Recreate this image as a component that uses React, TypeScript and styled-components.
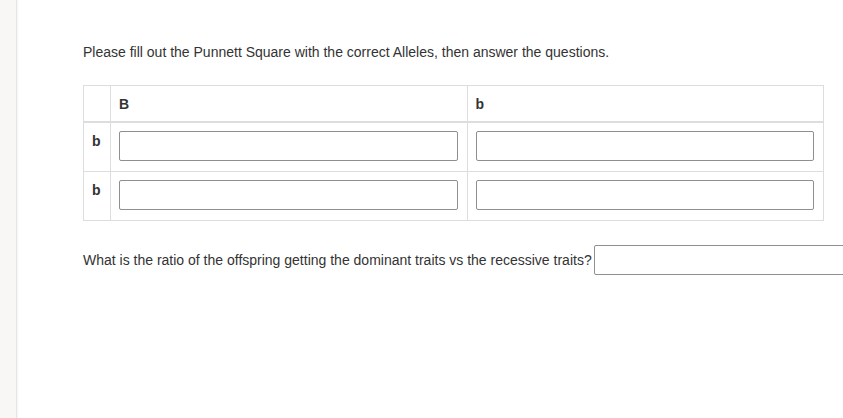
import React from "react";
import styled, { createGlobalStyle } from "styled-components";

const Global = createGlobalStyle`
  html, body {
    margin: 0;
    padding: 0;
    background: #ffffff;
    overflow: hidden;
  }
  body {
    font-family: "Liberation Sans", Arial, sans-serif;
    font-size: 14px;
    color: #333333;
  }
`;

const Page = styled.div`
  display: flex;
  width: 843px;
  height: 418px;
  overflow: hidden;
`;

const Sidebar = styled.div`
  flex: 0 0 16px;
  background: #f8f7f5;
  border-right: 1px solid #e6e5e3;
  box-shadow: 1px 0 2px rgba(0, 0, 0, 0.05);
`;

const Main = styled.main`
  flex: 1;
  padding: 42px 0 0 66px;
  min-width: 0;
`;

const Instructions = styled.p`
  margin: 0 0 23px;
  line-height: 20px;
`;

const Table = styled.table`
  width: 741px;
  border-collapse: collapse;
  table-layout: fixed;
`;

const HeadCell = styled.th<{ $narrow?: boolean }>`
  width: ${(p) => (p.$narrow ? "10px" : "auto")};
  border: 1px solid #dddddd;
  border-bottom: 2px solid #dddddd;
  padding: 9px 8px 7px;
  line-height: 19px;
  text-align: left;
  font-weight: bold;
  font-size: 14px;
  color: #333333;
`;

const RowLabel = styled.th`
  border: 1px solid #dddddd;
  padding: 8px;
  height: 32px;
  line-height: 20px;
  text-align: left;
  vertical-align: top;
  font-weight: bold;
  font-size: 14px;
  color: #333333;
`;

const Cell = styled.td`
  border: 1px solid #dddddd;
  padding: 8px 9px 10px 8px;
  height: 30px;
  vertical-align: top;
`;

const AnswerBox = styled.input<{ $w?: string }>`
  display: block;
  box-sizing: border-box;
  flex: 0 0 auto;
  width: ${(p) => p.$w ?? "100%"};
  height: 30px;
  margin: 0;
  padding: 4px 6px;
  border: 1px solid #8f8f8f;
  border-radius: 2px;
  background: #ffffff;
  font-family: inherit;
  font-size: 14px;
  color: #333333;
  outline: none;
`;

const QuestionRow = styled.div`
  display: flex;
  align-items: center;
  gap: 2px;
  margin-top: 24px;
  white-space: nowrap;
`;

const QuestionText = styled.span`
  line-height: 20px;
  flex: 0 0 auto;
`;

const columns = ["B", "b"];
const rows = ["b", "b"];

export default function App() {
  return (
    <>
      <Global />
      <Page>
        <Sidebar />
        <Main>
          <Instructions>
            Please fill out the Punnett Square with the correct Alleles, then answer the questions.
          </Instructions>
          <Table>
            <thead>
              <tr>
                <HeadCell $narrow />
                {columns.map((c, i) => (
                  <HeadCell key={i}>{c}</HeadCell>
                ))}
              </tr>
            </thead>
            <tbody>
              {rows.map((r, ri) => (
                <tr key={ri}>
                  <RowLabel>{r}</RowLabel>
                  {columns.map((_, ci) => (
                    <Cell key={ci}>
                      <AnswerBox type="text" aria-label={`${r}${columns[ci]}`} />
                    </Cell>
                  ))}
                </tr>
              ))}
            </tbody>
          </Table>
          <QuestionRow>
            <QuestionText>
              What is the ratio of the offspring getting the dominant traits vs the recessive traits?
            </QuestionText>
            <AnswerBox type="text" $w="300px" aria-label="ratio" />
          </QuestionRow>
        </Main>
      </Page>
    </>
  );
}
